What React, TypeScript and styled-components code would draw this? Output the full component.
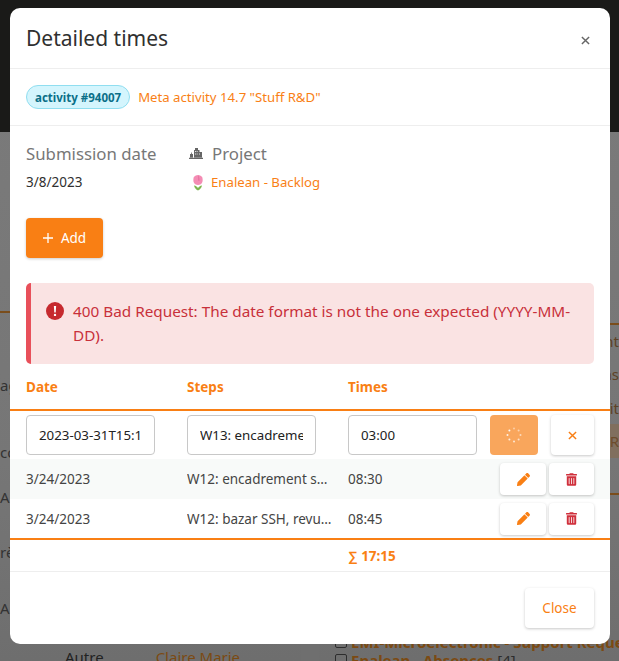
import React from "react";
import styled, { createGlobalStyle } from "styled-components";

const Global = createGlobalStyle`
  html, body { margin: 0; padding: 0; height: 100%; overflow: hidden; }
  body { font-family: "Noto Sans", sans-serif; background: #7a7a7a; }
  * { box-sizing: border-box; }
`;

const Page = styled.div`
  position: relative;
  width: 619px;
  height: 661px;
  overflow: hidden;
  background: linear-gradient(#7b7b7b, #767676 70%, #6e6e6e);
`;
const TopBar = styled.div`
  height: 132px;
  background: #1a1a18;
`;
const Backdrop = styled.div`
  display: grid;
  grid-template-columns: 301px 18px 300px;
  height: 529px;
`;
const BackLeft = styled.div`
  padding-top: 179px;
  color: #333;
  font-size: 15px;
  line-height: 20px;
`;
const Gutter = styled.div`
  background: #6f6f6f;
`;
const BackRight = styled.div`
  padding-top: 191px;
  color: #5e4226;
  font-size: 15px;
  line-height: 20px;
  text-align: right;
`;
const BackLine = styled.div<{ $gap: number }>`
  margin-top: ${(p) => p.$gap}px;
  white-space: nowrap;
`;
const BackRule = styled.div<{ $gap?: number }>`
  margin-top: ${(p) => p.$gap ?? 0}px;
  height: 2px;
  background: #7a4d1c;
`;
const BackBand = styled.div`
  margin-top: 6px;
  height: 34px;
  line-height: 34px;
  background: #806f5e;
  color: #6d4c2c;
  text-align: right;
`;
const BackLink = styled.span`
  color: #7c4a12;
  font-weight: 700;
`;
const BackEntry = styled.div<{ $top: number }>`
  margin-top: ${(p) => p.$top}px;
  margin-left: 16px;
  height: 16px;
  font-size: 15px;
  line-height: 16px;
  color: #2d2d2d;
  white-space: nowrap;
  text-align: left;
  display: flex;
  align-items: center;
  gap: 4px;
`;
const BackBox = styled.span`
  flex: none;
  width: 12px;
  height: 12px;
  border: 1px solid #2d2d2d;
  border-radius: 2px;
`;
const BackPerson = styled.div`
  margin-top: 29px;
  padding-left: 65px;
  display: flex;
  gap: 52px;
  color: #222;
  white-space: nowrap;
`;
const BackPersonLink = styled.span`
  color: #7c4a12;
`;

const Modal = styled.div`
  position: absolute;
  left: 10px;
  top: 8px;
  width: 600px;
  height: 636px;
  background: #fff;
  border-radius: 10px;
  display: flex;
  flex-direction: column;
  color: #303030;
  font-size: 14px;
`;
const Header = styled.div`
  height: 61px;
  border-bottom: 1px solid #eeeeee;
  display: flex;
  align-items: center;
  justify-content: space-between;
  padding: 0 16px;
`;
const Title = styled.h2`
  margin: 0;
  font-size: 21px;
  font-weight: 400;
  color: #303030;
`;
const CloseX = styled.button`
  border: 0;
  background: none;
  padding: 0;
  display: flex;
  margin-top: 5px;
  margin-right: 4px;
`;
const Subheader = styled.div`
  height: 57px;
  border-bottom: 1px solid #eeeeee;
  display: flex;
  align-items: center;
  gap: 8px;
  padding: 0 16px;
`;
const Badge = styled.span`
  height: 24px;
  padding: 0 8px;
  border-radius: 12px;
  background: #d4f5fd;
  border: 1px solid #90def0;
  color: #0b6f88;
  font-size: 11.5px;
  font-weight: 700;
  display: flex;
  align-items: center;
`;
const Link = styled.a`
  color: #f97f16;
  font-size: 13.2px;
`;
const Body = styled.div`
  padding: 15px 16px 0;
`;
const Meta = styled.div`
  display: grid;
  grid-template-columns: 161px 1fr;
  height: 77px;
`;
const MetaLabel = styled.div`
  font-size: 16.8px;
  color: #777;
  display: flex;
  align-items: center;
  gap: 9px;
  height: 24px;
`;
const ProjectLabel = styled(MetaLabel)`
  padding-left: 2px;
`;
const MetaValue = styled.div`
  font-size: 13.5px;
  margin-top: 8px;
  display: flex;
  align-items: center;
  gap: 6px;
`;
const ProjectValue = styled(MetaValue)`
  padding-left: 4px;
`;
const AddButton = styled.button`
  width: 77px;
  height: 40px;
  border: 0;
  border-radius: 4px;
  background: #f97f14;
  color: #fff;
  font: inherit;
  font-size: 13.5px;
  display: flex;
  align-items: center;
  justify-content: center;
  gap: 8px;
  box-shadow: 0 1px 3px rgba(0, 0, 0, 0.2);
`;
const Alert = styled.div`
  margin-top: 25px;
  height: 81px;
  background: #fae3e3;
  border-left: 5px solid #e8505a;
  border-radius: 5px;
  color: #c8303a;
  font-size: 15.3px;
  line-height: 24px;
  display: flex;
  gap: 9px;
  padding: 16px 16px 0 15px;
`;
const AlertIcon = styled.span`
  flex: none;
  margin-top: 3px;
  display: flex;
`;
const Table = styled.div`
  display: flex;
  flex-direction: column;
`;
const Row = styled.div<{ $alt?: boolean; $h: number; $line?: boolean }>`
  display: grid;
  grid-template-columns: 161px 161px 1fr auto;
  height: ${(p) => p.$h}px;
  align-items: center;
  padding: 0 16px;
  background: ${(p) => (p.$alt ? "#f8faf9" : "transparent")};
  border-bottom: ${(p) => (p.$line ? "2px solid #f97f14" : "0")};
`;
const Heading = styled.div`
  color: #f97f14;
  font-weight: 700;
  font-size: 13.5px;
`;
const Cell = styled.div`
  font-size: 13.5px;
  color: #444;
  white-space: nowrap;
  overflow: hidden;
  text-overflow: ellipsis;
  padding-right: 16px;
`;
const Input = styled.input`
  width: 129px;
  height: 40px;
  border: 1px solid #c8c8c8;
  border-radius: 4px;
  padding: 0 12px;
  font: inherit;
  font-size: 13.3px;
  color: #222;
  background: #fff;
`;
const Actions = styled.div<{ $gap: number }>`
  display: flex;
  gap: ${(p) => p.$gap}px;
`;
const Spin = styled.div`
  width: 48px;
  height: 40px;
  background: #f9a65c;
  border-radius: 4px;
  display: flex;
  align-items: center;
  justify-content: center;
`;
const IconBtn = styled.button<{ $w: number; $h: number }>`
  width: ${(p) => p.$w}px;
  height: ${(p) => p.$h}px;
  border: 0;
  border-radius: 4px;
  background: #fff;
  display: flex;
  align-items: center;
  justify-content: center;
  padding: 0;
  box-shadow: 0 1px 3px rgba(0, 0, 0, 0.22);
`;
const Total = styled.div`
  color: #f97f14;
  font-weight: 700;
  font-size: 13.5px;
`;
const Footer = styled.div`
  margin-top: auto;
  height: 73px;
  border-top: 1px solid #eeeeee;
  display: flex;
  align-items: center;
  justify-content: flex-end;
  padding: 0 16px;
`;
const CloseBtn = styled.button`
  width: 69px;
  height: 40px;
  border: 0;
  border-radius: 4px;
  background: #fff;
  color: #f97f14;
  font: inherit;
  font-size: 13.5px;
  box-shadow: 0 1px 3px rgba(0, 0, 0, 0.22);
`;

const Pencil = () => (
  <svg width="13" height="13" viewBox="0 0 512 512" fill="#f97f14">
    <path d="M497.9 142.1l-46.1 46.1c-4.700 4.700-12.300 4.700-17 0l-111-111c-4.700-4.700-4.700-12.300 0-17l46.1-46.100c18.700-18.700 49.100-18.700 67.900 0l60.100 60.100c18.800 18.700 18.800 49.100 0 67.900zM284.200 99.800L21.600 362.400.4 483.900c-2.900 16.400 11.400 30.600 27.800 27.800l121.500-21.300 262.600-262.600c4.700-4.700 4.700-12.300 0-17l-111-111c-4.800-4.700-12.400-4.700-17.100 0z" />
  </svg>
);
const Trash = () => (
  <svg width="11" height="13" viewBox="0 0 448 512" fill="#d0303c">
    <path d="M32 464a48 48 0 0 0 48 48h288a48 48 0 0 0 48-48V128H32zm272-256a16 16 0 0 1 32 0v224a16 16 0 0 1-32 0zm-96 0a16 16 0 0 1 32 0v224a16 16 0 0 1-32 0zm-96 0a16 16 0 0 1 32 0v224a16 16 0 0 1-32 0zM432 32H312l-9.400-18.700A24 24 0 0 0 281.100 0H166.800a23.700 23.700 0 0 0-21.400 13.300L136 32H16A16 16 0 0 0 0 48v32a16 16 0 0 0 16 16h416a16 16 0 0 0 16-16V48a16 16 0 0 0-16-16z" />
  </svg>
);
const Times = ({ c, s }: { c: string; s: number }) => (
  <svg width={s} height={s} viewBox="0 0 10 10" stroke={c} strokeWidth="1.6" fill="none">
    <path d="M1 1l8 8M9 1l-8 8" />
  </svg>
);
const Spinner = () => (
  <svg width="16" height="16" viewBox="0 0 16 16" fill="#fff">
    {[[8, 1.500], [12.600, 3.400], [14.500, 8], [12.600, 12.600], [8, 14.500], [3.400, 12.600], [1.500, 8], [3.400, 3.400]].map(([x, y], i) => (
      <circle key={i} cx={x} cy={y} r="1" opacity={0.45 + i * 0.07} />
    ))}
  </svg>
);
const City = () => (
  <svg width="14" height="12" viewBox="0 0 14 12" fill="#666">
    <path d="M0 10.800h14V12H0zM1 7h1V5.500h.8V7H4v3.500H1zM5 3h1V1h3v2h1.500v2H13v5.500H5zm1.200 1v1h.8V4zm1.500 0v1h.8V4zM6.200 6.500v1h.8v-1zm1.500 0v1h.8v-1zm2.500 0v1h.8v-1z" />
  </svg>
);
const Tulip = () => (
  <svg width="14" height="17" viewBox="0 0 14 17">
    <path d="M7 16.500C5 15.500 3.500 14 3 11.500c2 .3 3.300 1.300 4 2.500.7-1.200 2-2.200 4-2.500-.5 2.500-2 4-4 5z" fill="#7fb550" />
    <path d="M2.800 3C4 1.800 5.500 1 7 1s3 .8 4.200 2c.5 1.500.6 3.500.2 5C10.800 10 9 11 7 11S3.200 10 2.600 8c-.4-1.500-.3-3.500.2-5z" fill="#f48cb4" />
    <path d="M7 1c1.200 1.500 1.800 3.500 1.500 6-.5-.3-1-.5-1.500-.5V1z" fill="#e876a3" />
  </svg>
);
const Plus = () => (
  <svg width="10" height="10" viewBox="0 0 10 10" stroke="#fff" strokeWidth="1.300">
    <path d="M5 0v10M0 5h10" />
  </svg>
);
const ErrorIcon = () => (
  <svg width="18" height="18" viewBox="0 0 18 18">
    <circle cx="9" cy="9" r="9" fill="#c62a2f" />
    <path d="M7.900 4h2.200l-.4 6.500H8.300z" fill="#fff" />
    <circle cx="9" cy="12.900" r="1.200" fill="#fff" />
  </svg>
);

export default function App() {
  return (
    <>
      <Global />
      <Page>
        <TopBar />
        <Backdrop>
          <BackLeft>
            <BackRule />
            <BackLine $gap={62}>ag</BackLine>
            <BackLine $gap={47}>co</BackLine>
            <BackLine $gap={25}>Ap</BackLine>
            <BackLine $gap={35}>rè</BackLine>
            <BackLine $gap={36}>Ap</BackLine>
            <BackPerson>
              <span>Autre</span>
              <BackPersonLink>Claire Marie</BackPersonLink>
            </BackPerson>
          </BackLeft>
          <Gutter />
          <BackRight>
            <BackRule />
            <BackLine $gap={6}>nt</BackLine>
            <BackLine $gap={13}>as</BackLine>
            <BackLine $gap={14}>tit</BackLine>
            <BackBand>R</BackBand>
            <BackRule $gap={35} />
            <BackEntry $top={139}><BackBox /><BackLink>EMI-Microelectronic - Support Requests</BackLink></BackEntry>
            <BackEntry $top={2}><BackBox /><BackLink>Enalean - Absences</BackLink> [4]</BackEntry>
          </BackRight>
        </Backdrop>
        <Modal>
          <Header>
            <Title>Detailed times</Title>
            <CloseX aria-label="Close"><Times c="#666" s={9} /></CloseX>
          </Header>
          <Subheader>
            <Badge>activity #94007</Badge>
            <Link>Meta activity 14.7 "Stuff R&amp;D"</Link>
          </Subheader>
          <Body>
            <Meta>
              <div>
                <MetaLabel>Submission date</MetaLabel>
                <MetaValue>3/8/2023</MetaValue>
              </div>
              <div>
                <ProjectLabel><City />Project</ProjectLabel>
                <ProjectValue><Tulip /><Link>Enalean - Backlog</Link></ProjectValue>
              </div>
            </Meta>
            <AddButton><Plus />Add</AddButton>
            <Alert>
              <AlertIcon><ErrorIcon /></AlertIcon>
              <span>400 Bad Request: The date format is not the one expected (YYYY-MM-DD).</span>
            </Alert>
          </Body>
          <Table>
            <Row $h={47} $line>
              <Heading>Date</Heading>
              <Heading>Steps</Heading>
              <Heading>Times</Heading>
              <span />
            </Row>
            <Row $h={48}>
              <Input readOnly value="2023-03-31T15:16" />
              <Input readOnly value="W13: encadrement" />
              <Input readOnly value="03:00" />
              <Actions $gap={13}>
                <Spin><Spinner /></Spin>
                <IconBtn $w={43} $h={40}><Times c="#f97f14" s={9} /></IconBtn>
              </Actions>
            </Row>
            <Row $alt $h={40}>
              <Cell>3/24/2023</Cell>
              <Cell>W12: encadrement suivi</Cell>
              <Cell>08:30</Cell>
              <Actions $gap={3}>
                <IconBtn $w={46} $h={32}><Pencil /></IconBtn>
                <IconBtn $w={45} $h={32}><Trash /></IconBtn>
              </Actions>
            </Row>
            <Row $h={41} $line>
              <Cell>3/24/2023</Cell>
              <Cell>W12: bazar SSH, revue de code</Cell>
              <Cell>08:45</Cell>
              <Actions $gap={3}>
                <IconBtn $w={46} $h={32}><Pencil /></IconBtn>
                <IconBtn $w={45} $h={32}><Trash /></IconBtn>
              </Actions>
            </Row>
            <Row $h={31}>
              <span />
              <span />
              <Total>∑ 17:15</Total>
              <span />
            </Row>
          </Table>
          <Footer>
            <CloseBtn>Close</CloseBtn>
          </Footer>
        </Modal>
      </Page>
    </>
  );
}
